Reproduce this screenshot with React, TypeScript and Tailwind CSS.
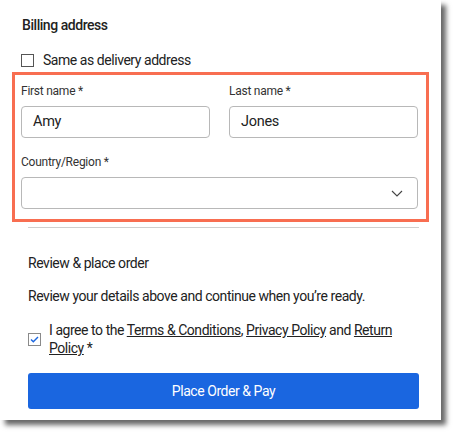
import * as React from "react"

const font = { fontFamily: "Roboto, 'Noto Sans', sans-serif" }

function Field({ label, value }: { label: string; value: string }) {
  return (
    <div className="flex flex-col">
      <label className="text-[12px] leading-[16px] tracking-[-0.25px] text-[#333]">{label}</label>
      <div className="mt-[7px] flex h-[32px] items-center rounded-[4px] border border-[#b8b8b8] pl-[11px] text-[14.5px] tracking-[-0.3px] text-[#222]">
        {value}
      </div>
    </div>
  )
}

export default function App() {
  return (
    <div className="h-[435px] w-[456px] bg-white" style={font}>
      <div className="flex h-[420px] w-[441px] flex-col bg-white shadow-[5px_5px_5px_rgba(0,0,0,0.6)]">
        <h2 className="pl-[22px] pt-[15px] text-[14px] font-medium leading-[20px] tracking-[-0.45px] text-[#222]">
          Billing address
        </h2>

        <label className="mt-[15px] flex items-center gap-[9px] pl-[21px] text-[14px] leading-[20px] tracking-[-0.45px] text-[#222]">
          <span className="h-[13px] w-[13px] border border-[#555] bg-white" />
          Same as delivery address
        </label>

        <div className="ml-[12px] mt-[2px] w-[417px] border-[3px] border-[#f86e51] pb-[10px] pl-[6px] pr-[8px] pt-[8px]">
          <div className="grid grid-cols-2 gap-x-[19px]">
            <Field label="First name *" value="Amy" />
            <Field label="Last name *" value="Jones" />
          </div>
          <div className="mt-[16px] flex flex-col">
            <label className="text-[12px] leading-[16px] tracking-[-0.25px] text-[#333]">Country/Region *</label>
            <div className="mt-[7px] flex h-[32px] items-center justify-end rounded-[4px] border border-[#b8b8b8] pr-[14px]">
              <svg width="12" height="7" viewBox="0 0 12 7" fill="none">
                <path d="M1 1l5 5 5-5" stroke="#444" strokeWidth="1.1" />
              </svg>
            </div>
          </div>
        </div>

        <div className="ml-[28px] mt-[5px] h-px w-[391px] bg-[#cfcfcf]" />

        <div className="flex flex-col pl-[28px] pr-[22px] tracking-[-0.45px]">
          <h3 className="mt-[25px] text-[14px] leading-[20px] text-[#222]">Review &amp; place order</h3>
          <p className="mt-[13px] text-[14px] leading-[20px] text-[#222]">
            Review your details above and continue when you’re ready.
          </p>

          <div className="mt-[15px] flex items-start gap-[8px]">
            <span className="mt-[12px] flex h-[13px] w-[13px] shrink-0 items-center justify-center border border-[#8a8a8a] bg-white">
              <svg width="9" height="7" viewBox="0 0 9 7" fill="none">
                <path d="M1 3.5l2.3 2.2L8 1" stroke="#1a66e0" strokeWidth="1.4" />
              </svg>
            </span>
            <p className="text-[14px] leading-[18px] text-[#222]">
              I agree to the <span className="underline">Terms &amp; Conditions</span>,{" "}
              <span className="underline">Privacy Policy</span> and{" "}
              <span className="underline">Return</span> <span className="underline">Policy</span> *
            </p>
          </div>

          <button className="mt-[16px] h-[36px] w-[391px] rounded-[3px] bg-[#1a66e0] text-[14px] tracking-[-0.45px] text-white">
            Place Order &amp; Pay
          </button>
        </div>
      </div>
    </div>
  )
}
